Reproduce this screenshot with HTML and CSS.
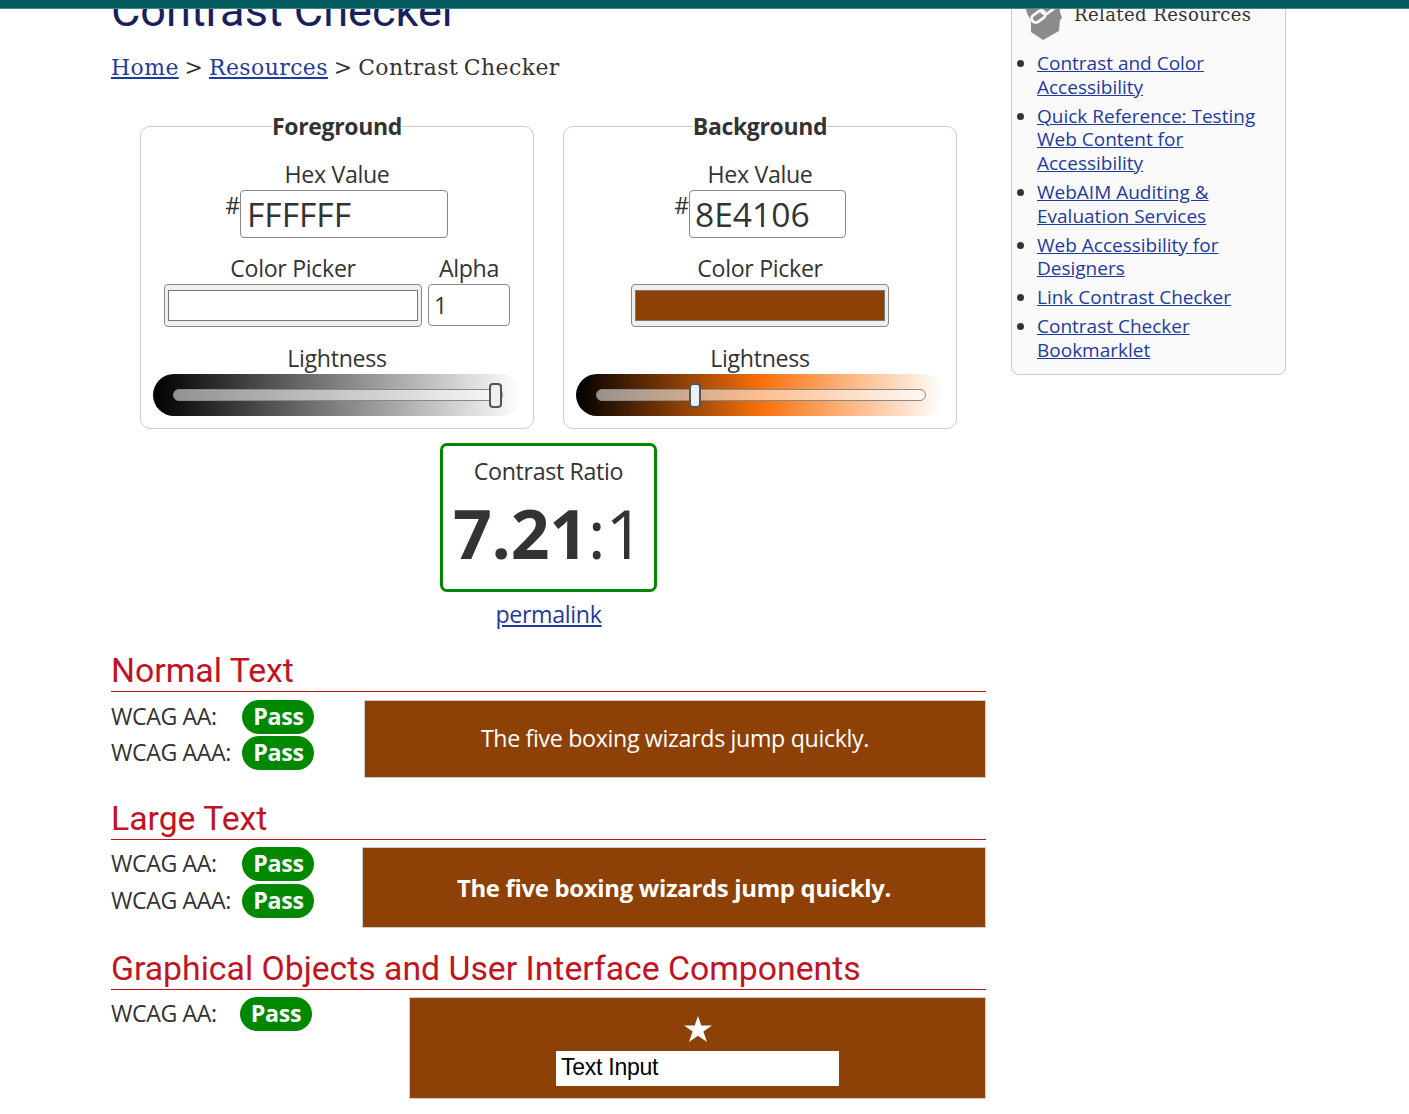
FILE: index.html
```html
<!DOCTYPE html>
<html lang="en">
<head>
<meta charset="utf-8">
<title>Contrast Checker</title>
<link rel="stylesheet" href="styles.css">
</head>
<body>
<div class="topbar"></div>
<div class="page">
  <main class="main">
    <h1 class="title"><span>Contrast Checker</span></h1>
    <nav class="crumbs"><a href="#">Home</a> &gt; <a href="#">Resources</a> &gt; <span>Contrast Checker</span></nav>

    <div class="panels">
      <section class="panel">
        <h2 class="legend"><span>Foreground</span></h2>
        <div class="label">Hex Value</div>
        <div class="hexrow hex-fg"><span class="hash">#</span><div class="hex">FFFFFF</div></div>
        <div class="pickers">
          <div class="field"><div class="label">Color Picker</div><div class="picker"><div class="swatch white"></div></div></div>
          <div class="field"><div class="label">Alpha</div><div class="alpha">1</div></div>
        </div>
        <div class="label lightness">Lightness</div>
        <div class="slider gray"><div class="track"><div class="thumb thumb-fg"></div></div></div>
      </section>
      <section class="panel">
        <h2 class="legend"><span>Background</span></h2>
        <div class="label">Hex Value</div>
        <div class="hexrow hex-bg"><span class="hash">#</span><div class="hex">8E4106</div></div>
        <div class="pickers">
          <div class="field"><div class="label">Color Picker</div><div class="picker"><div class="swatch brown"></div></div></div>
        </div>
        <div class="label lightness">Lightness</div>
        <div class="slider orange"><div class="track"><div class="thumb thumb-bg"></div></div></div>
      </section>
    </div>

    <div class="ratio"><div class="ratio-label">Contrast Ratio</div><div class="ratio-value"><b>7.21</b>:1</div></div>
    <div class="permalink"><a href="#">permalink</a></div>

    <section class="result normal">
      <h2 class="heading"><span>Normal Text</span></h2>
      <div class="result-body">
        <div class="grades">
          <div class="grade"><span class="grade-name">WCAG AA:</span><b class="pass">Pass</b></div>
          <div class="grade"><span class="grade-name">WCAG AAA:</span><b class="pass">Pass</b></div>
        </div>
        <div class="sample"><span>The five boxing wizards jump quickly.</span></div>
      </div>
    </section>
    <section class="result large">
      <h2 class="heading"><span>Large Text</span></h2>
      <div class="result-body">
        <div class="grades">
          <div class="grade"><span class="grade-name">WCAG AA:</span><b class="pass">Pass</b></div>
          <div class="grade"><span class="grade-name">WCAG AAA:</span><b class="pass">Pass</b></div>
        </div>
        <div class="sample"><b>The five boxing wizards jump quickly.</b></div>
      </div>
    </section>
    <section class="result graphic">
      <h2 class="heading"><span>Graphical Objects and User Interface Components</span></h2>
      <div class="result-body">
        <div class="grades">
          <div class="grade"><span class="grade-name">WCAG AA:</span><b class="pass">Pass</b></div>
        </div>
        <div class="sample">
          <svg class="star" viewBox="0 0 28 26"><path d="M14 0 L17.3 9.6 H28 L19.4 15.6 L23 26 L14 19.8 L5 26 L8.6 15.6 L0 9.6 H10.7 Z" fill="#fff"/></svg>
          <div class="textinput">Text Input</div>
        </div>
      </div>
    </section>
  </main>

  <aside class="side">
    <div class="side-head">
      <svg class="side-icon" viewBox="0 0 36 48"><path d="M18 0 C7 0 0 6 0 16 C0 23 5 25 5 31 V40 L17 48 L33 39 L34 28 L36 26 L34 20 C34 8 28 0 18 0 Z" fill="#8c8c8c"/><g fill="none" stroke="#fff" stroke-width="2.7"><rect x="-7.5" y="-4" width="15" height="8" rx="4" transform="translate(12.5 24.5) rotate(-35)"/><rect x="-7.5" y="-4" width="15" height="8" rx="4" transform="translate(22 16) rotate(-35)"/></g></svg>
      <span>Related Resources</span>
    </div>
    <ul class="links">
      <li><a href="#">Contrast and Color<br>Accessibility</a></li>
      <li><a href="#">Quick Reference: Testing<br>Web Content for<br>Accessibility</a></li>
      <li><a href="#">WebAIM Auditing &amp;<br>Evaluation Services</a></li>
      <li><a href="#">Web Accessibility for<br>Designers</a></li>
      <li><a href="#">Link Contrast Checker</a></li>
      <li><a href="#">Contrast Checker<br>Bookmarklet</a></li>
    </ul>
  </aside>
</div>
</body>
</html>
```
FILE: styles.css
```css
* { box-sizing: border-box; }
html, body { margin: 0; height: 1114px; overflow: hidden; }
body { background: #fff; color: #333; font: 23.2px/30px "Open Sans", "Noto Sans", sans-serif; letter-spacing: -.33px; }
a { color: #1f3a9e; text-decoration: underline; }
h1, h2 { margin: 0; font-weight: 400; }

.topbar { position: fixed; top: 0; left: 0; right: 0; height: 9px; background: #035b60; border-bottom: 1px solid #43868a; z-index: 5; }
.page { display: flex; align-items: flex-start; gap: 25px; padding-left: 111px; }
.main { width: 875px; white-space: nowrap; }

.title { height: 40px; font: 400 45.1px/40px Roboto, sans-serif; letter-spacing: 0; color: #1a1f5e; margin-top: -9px; }
.crumbs { margin-top: 22px; height: 30px; font: 21.9px/30px "DejaVu Serif", serif; letter-spacing: .45px; word-spacing: -1.7px; }

.panels { display: flex; gap: 29px; margin: 43px 0 0 29px; }
.panel { width: 394px; height: 303px; border: 1px solid #ccc; border-radius: 10px; padding: 0 12px; text-align: center; }
.legend { font-size: 23px; font-weight: 700; line-height: 29px; height: 30px; margin-top: -15px; letter-spacing: -.35px; }
.legend span { background: #fff; }
.panel > .label { margin-top: 18px; }
.label { height: 30px; line-height: 29px; }
.hexrow { display: flex; height: 48px; }
.hash { line-height: 30px; }
.hex-fg { padding-left: 73px; }
.hex-bg { padding-left: 99px; }
.hexrow .hash { width: 14px; display: flex; justify-content: flex-end; }
.hex { border: 1px solid #888; border-radius: 4px; height: 48px; padding-left: 6px; font-size: 33.6px; line-height: 47px; text-align: left; letter-spacing: 0; }
.hex-fg .hex { width: 208px; }
.hex-bg .hex { width: 157px; padding-left: 5px; }
.pickers { display: flex; justify-content: center; gap: 6px; margin-top: 16px; height: 73px; }
.picker { width: 258px; height: 43px; border: 1px solid #888; border-radius: 4px; background: #efefef; padding: 5px 3px; }
.swatch { height: 31px; border: 1px solid #777; }
.white { background: #fff; }
.brown { background: #8e4106; }
.alpha { width: 82px; height: 42px; border: 1px solid #888; border-radius: 4px; line-height: 41px; padding-left: 5px; text-align: left; }
.panel > .lightness { margin-top: 17px; }
.slider { height: 42px; border-radius: 21px; padding: 15px 18px 15px 20px; }
.gray { background: linear-gradient(to right, #000, #808080, #fff); }
.orange { background: linear-gradient(to right, #000, #f8700a, #fff); }
.track { position: relative; height: 12px; border: 1px solid #888; border-radius: 6px; background: rgba(255,255,255,.55); }
.thumb { position: absolute; top: -7px; width: 13px; height: 25px; border: 2px solid #555; border-radius: 4px; background: #efefef; }
.thumb-fg { left: 315px; }
.thumb-bg { left: 92px; width: 12px; }

.ratio { width: 217px; height: 149px; margin: 14px auto 0; border: 3px solid #080; border-radius: 7px; text-align: center; padding-top: 11px; }
.ratio-label { line-height: 29px; }
.ratio-value { font-size: 68px; line-height: 94px; height: 97px; letter-spacing: -.3px; }
.permalink { text-align: center; margin-top: 8px; height: 30px; line-height: 29px; }

.heading { height: 42px; border-bottom: 1px solid #b9121b; font: 400 33.75px/42px Roboto, sans-serif; letter-spacing: 0; color: #c11423; }
.normal { margin-top: 20px; height: 148px; }
.large { height: 150px; }
.result-body { display: flex; justify-content: space-between; padding-top: 8px; }
.grades { display: flex; flex-direction: column; gap: 2px; }
.grade { display: flex; height: 34px; line-height: 32px; }
.grade-name { width: 131px; letter-spacing: -.42px; }
.pass { width: 72px; height: 34px; border-radius: 17px; background: #080; color: #fff; text-align: center; padding-left: 1px; }
.graphic .pass { padding-left: 0; }
.sample { background: #8e4106; border: 1px solid #ccc; color: #fff; display: flex; align-items: center; justify-content: center; }
.normal .sample { width: 622px; height: 78px; padding-bottom: 2px; }
.large .result-body { padding-top: 7px; }
.large .sample { width: 624px; height: 81px; font-size: 23.9px; padding-top: 1px; letter-spacing: -.3px; }
.large .grades { gap: 3px; }
.graphic .result-body { padding-top: 7px; }
.graphic .grade-name { width: 129px; }
.graphic .sample { width: 577px; height: 102px; flex-direction: column; justify-content: flex-start; padding-top: 18px; }
.star { width: 28px; height: 26px; flex: none; }
.textinput { width: 283px; height: 35px; margin-top: 9px; background: #fff; color: #000; font: 23px/33px "Liberation Sans", sans-serif; letter-spacing: -.25px; padding-left: 5px; }

.side { width: 275px; height: 395px; margin-top: -20px; border: 1px solid #ccc; border-radius: 8px; background: #fafafa; white-space: nowrap; letter-spacing: 0; }
.side-head { display: flex; align-items: flex-start; height: 71px; padding: 11px 0 0 14px; font: 18px/28px "DejaVu Serif", serif; letter-spacing: .42px; }
.side-icon { width: 36px; height: 48px; margin-right: 12px; }
.side-head span { margin-top: 9px; }
.links { margin: 0; padding-left: 25px; font-size: 19px; line-height: 23.75px; }
.links li { margin-bottom: 5.1px; }
```
